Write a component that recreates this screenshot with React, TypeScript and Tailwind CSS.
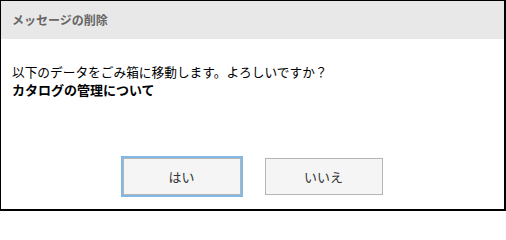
export default function App() {
  return (
    <div className="w-[506px] h-[211px] bg-white border-t border-l border-r-2 border-b-2 border-black flex flex-col font-['Noto_Sans_CJK_JP',sans-serif]">
      <div className="h-[38px] shrink-0 bg-[#e8e8e8] flex items-center px-[11px]">
        <h1 className="text-[12px] font-bold text-[#666666] leading-none">メッセージの削除</h1>
      </div>

      <div className="flex-1 pt-[24px] px-[11px] text-[12.7px] leading-[18px] text-black">
        <p>以下のデータをごみ箱に移動します。よろしいですか？</p>
        <p className="font-bold text-[13px]">カタログの管理について</p>
      </div>

      <div className="flex justify-center gap-[24px] pb-[14px]">
        <button
          type="button"
          className="w-[118px] h-[37px] bg-[#f5f5f5] border border-[#b5b5b5] shadow-[0_0_0_2px_#80b9e8] text-[13px] text-[#333333]"
        >
          はい
        </button>
        <button
          type="button"
          className="w-[118px] h-[37px] bg-[#f5f5f5] border border-[#b5b5b5] text-[13px] text-[#333333]"
        >
          いいえ
        </button>
      </div>
    </div>
  );
}
